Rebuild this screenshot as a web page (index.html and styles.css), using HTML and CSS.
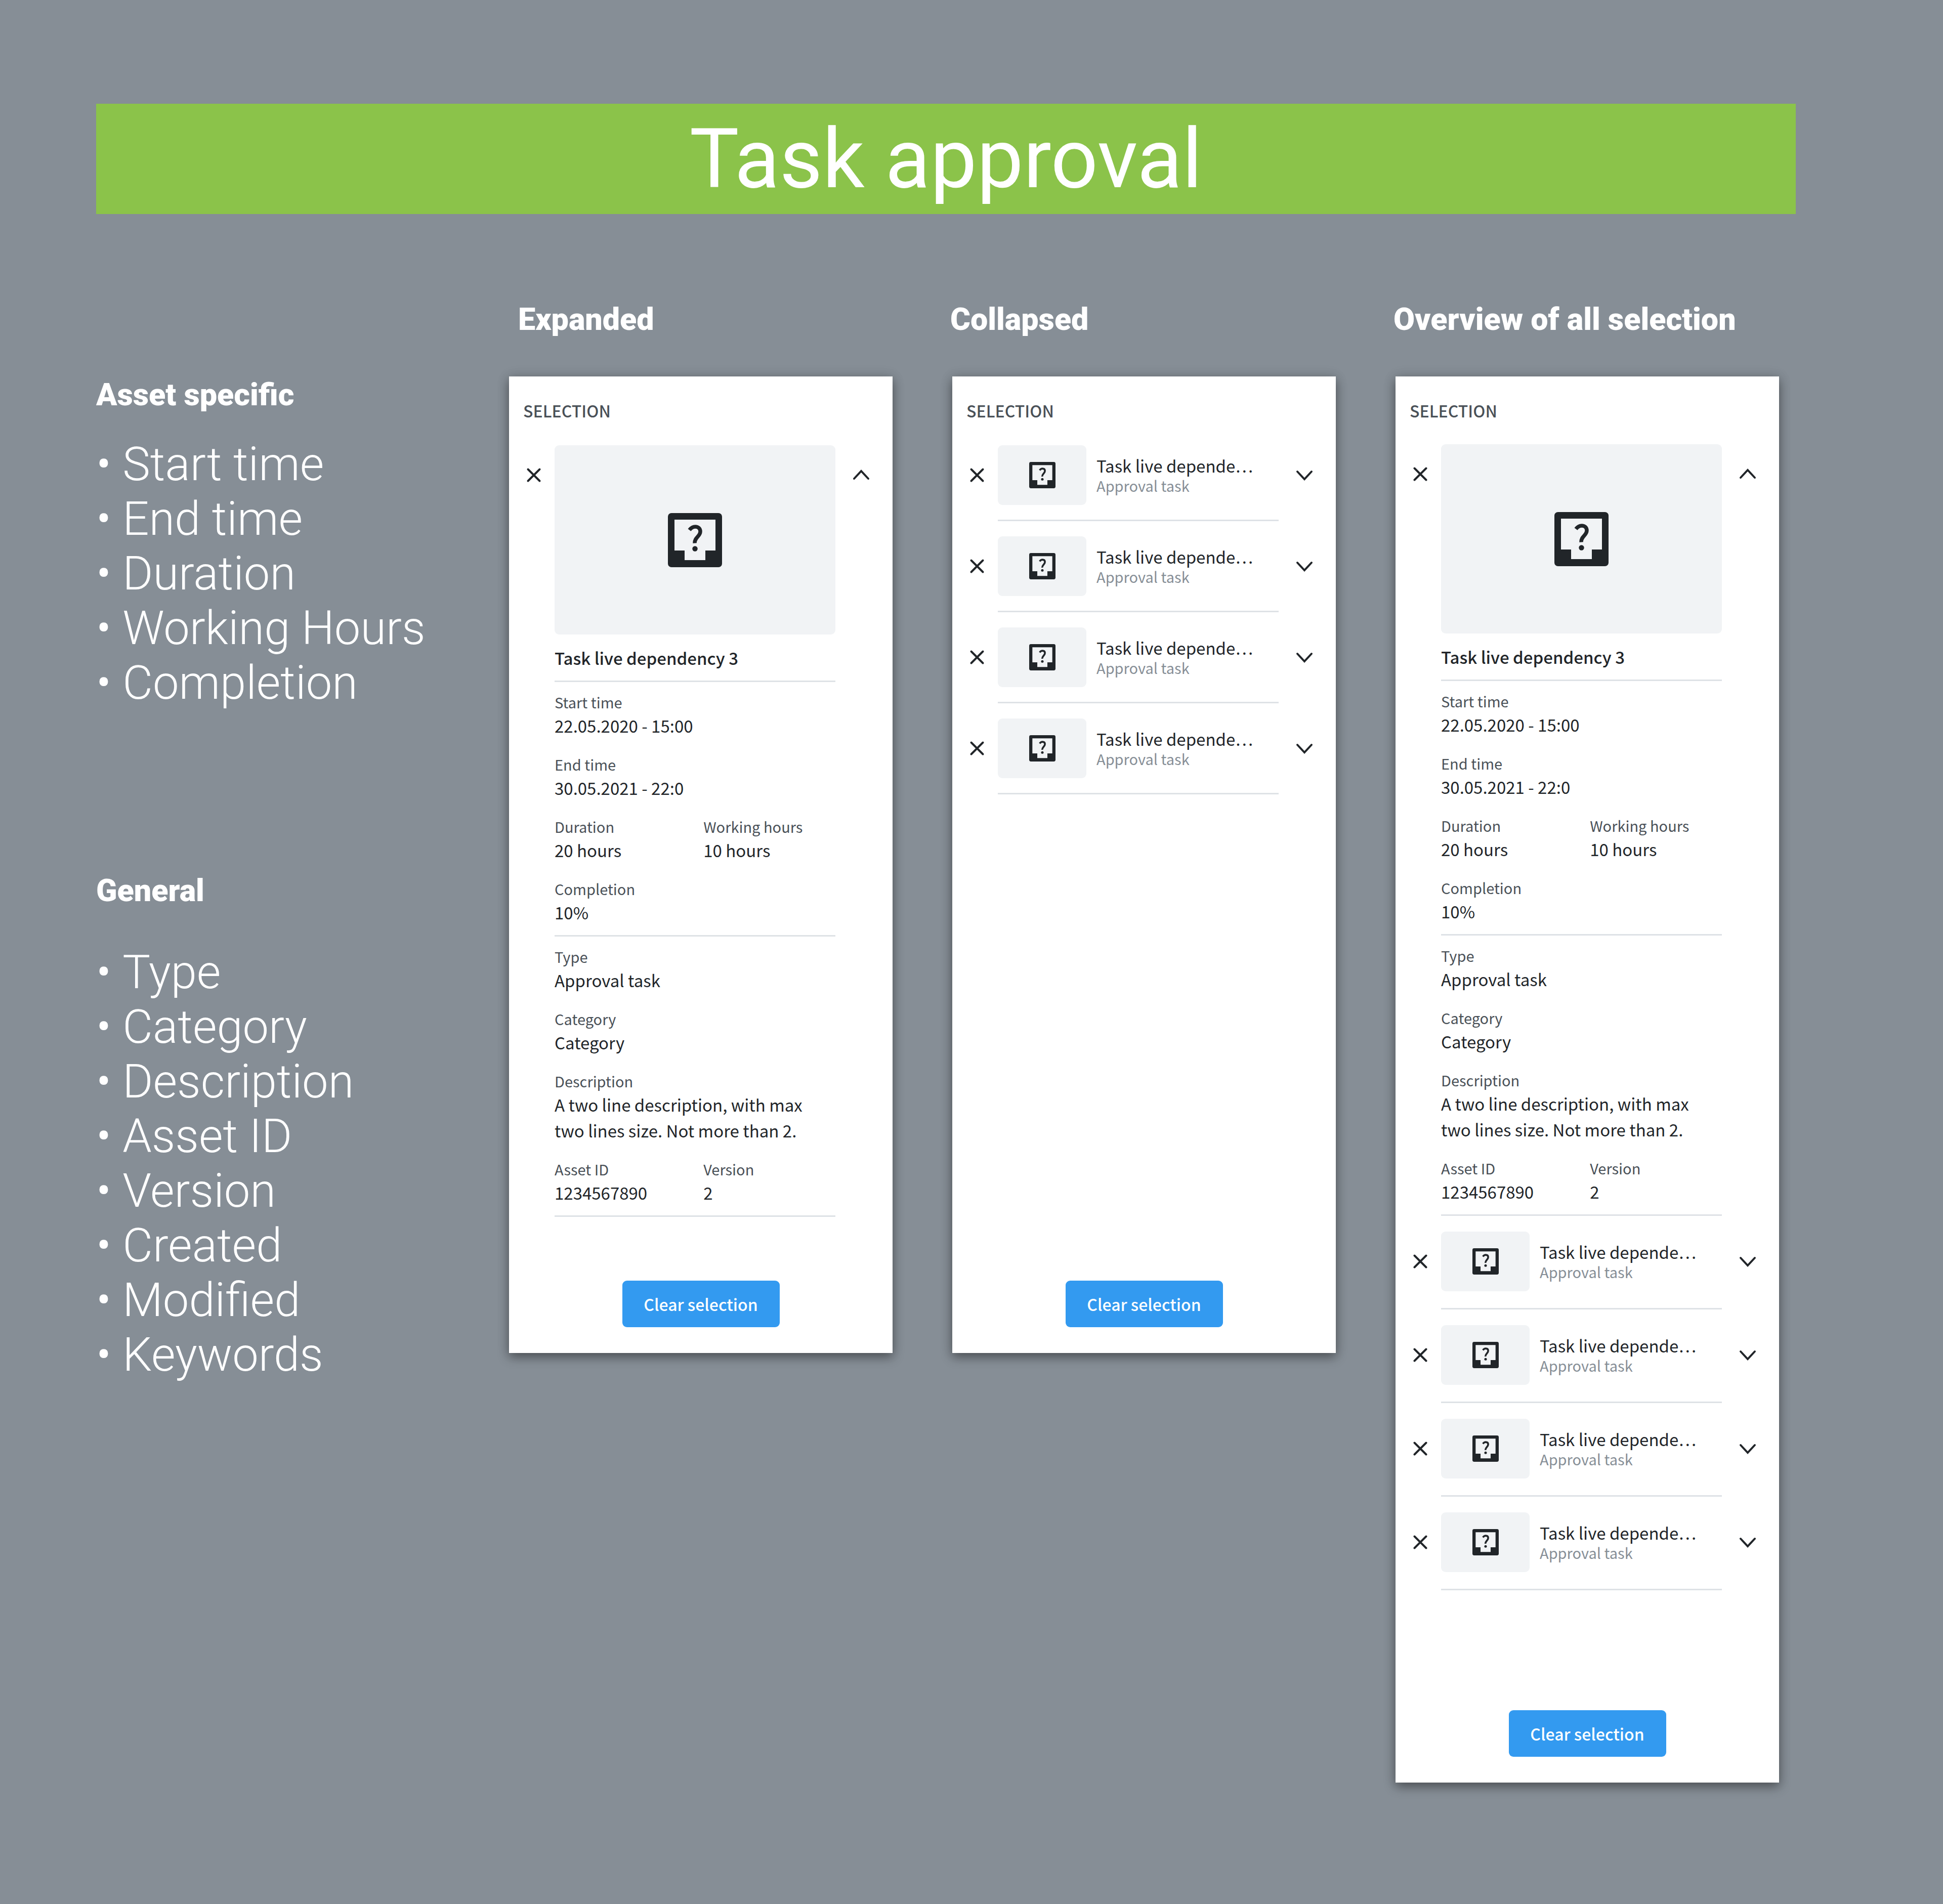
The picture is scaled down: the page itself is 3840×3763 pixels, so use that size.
FILE: index.html
```html
<!DOCTYPE html>
<html lang="en">
<head>
  <meta charset="UTF-8">
  <meta name="viewport" content="width=device-width, initial-scale=1.0">
  <title>Task approval</title>
  <link rel="stylesheet" href="styles.css">
</head>
<body>

  <!-- shared icons -->
  <svg class="sprite" aria-hidden="true">
    <symbol id="icon-close" viewBox="0 0 50 50">
      <path d="M13.500 13.500l23 23M36.500 13.500l-23 23"/>
    </symbol>
    <symbol id="icon-up" viewBox="0 0 50 50">
      <path d="M11 32l14-15 14 15"/>
    </symbol>
    <symbol id="icon-down" viewBox="0 0 50 50">
      <path d="M11 18l14 15 14-15"/>
    </symbol>
    <symbol id="icon-task" viewBox="0 0 107 107">
      <path fill="#212529" fill-rule="evenodd" d="M7 0h93a7 7 0 0 1 7 7v93a7 7 0 0 1-7 7H7a7 7 0 0 1-7-7V7a7 7 0 0 1 7-7zM13 13v61h20v19h41V74h20V13z"/>
      <path fill="none" stroke="#212529" stroke-width="7.500" d="M42.500 33.500C46 29 49.500 27 54 27c6.500 0 10 4 10 9.500C64 46 52.500 48 53 59.500"/>
      <circle cx="53.500" cy="70.500" r="5.200" fill="#212529"/>
    </symbol>
  </svg>

  <main class="page">
    <h1 class="banner">Task approval</h1>

    <div class="board">
      <div class="notes">
        <h2>Asset specific</h2>
        <ul>
          <li>Start time</li>
          <li>End time</li>
          <li>Duration</li>
          <li>Working Hours</li>
          <li>Completion</li>
        </ul>
        <h2 class="notes-general">General</h2>
        <ul>
          <li>Type</li>
          <li>Category</li>
          <li>Description</li>
          <li>Asset ID</li>
          <li>Version</li>
          <li>Created</li>
          <li>Modified</li>
          <li>Keywords</li>
        </ul>
      </div>

      <!-- Expanded -->
      <div class="column column-expanded">
        <h2>Expanded</h2>
        <section class="panel">
          <h3>SELECTION</h3>
          <article class="item">
            <button type="button" class="icon-btn" aria-label="Remove"><svg><use href="#icon-close"/></svg></button>
            <div class="details">
              <div class="preview"><svg><use href="#icon-task"/></svg></div>
              <h4>Task live dependency 3</h4>
              <dl>
                <div class="field"><dt>Start time</dt><dd>22.05.2020 - 15:00</dd></div>
                <div class="field"><dt>End time</dt><dd>30.05.2021 - 22:0</dd></div>
                <div class="field-row">
                  <div class="field"><dt>Duration</dt><dd>20 hours</dd></div>
                  <div class="field"><dt>Working hours</dt><dd>10 hours</dd></div>
                </div>
                <div class="field"><dt>Completion</dt><dd>10%</dd></div>
              </dl>
              <dl>
                <div class="field"><dt>Type</dt><dd>Approval task</dd></div>
                <div class="field"><dt>Category</dt><dd>Category</dd></div>
                <div class="field"><dt>Description</dt><dd>A two line description, with max<br>two lines size. Not more than 2.</dd></div>
                <div class="field-row">
                  <div class="field"><dt>Asset ID</dt><dd>1234567890</dd></div>
                  <div class="field"><dt>Version</dt><dd>2</dd></div>
                </div>
              </dl>
            </div>
            <button type="button" class="icon-btn toggle" aria-label="Collapse"><svg><use href="#icon-up"/></svg></button>
          </article>
          <footer><button type="button" class="clear-btn">Clear selection</button></footer>
        </section>
      </div>

      <!-- Collapsed -->
      <div class="column">
        <h2>Collapsed</h2>
        <section class="panel">
          <h3>SELECTION</h3>
          <article class="item">
            <button type="button" class="icon-btn" aria-label="Remove"><svg><use href="#icon-close"/></svg></button>
            <div class="summary">
              <div class="thumb"><svg><use href="#icon-task"/></svg></div>
              <div class="text"><p class="name">Task live depende…</p><p class="type">Approval task</p></div>
            </div>
            <button type="button" class="icon-btn toggle" aria-label="Expand"><svg><use href="#icon-down"/></svg></button>
          </article>
          <article class="item">
            <button type="button" class="icon-btn" aria-label="Remove"><svg><use href="#icon-close"/></svg></button>
            <div class="summary">
              <div class="thumb"><svg><use href="#icon-task"/></svg></div>
              <div class="text"><p class="name">Task live depende…</p><p class="type">Approval task</p></div>
            </div>
            <button type="button" class="icon-btn toggle" aria-label="Expand"><svg><use href="#icon-down"/></svg></button>
          </article>
          <article class="item">
            <button type="button" class="icon-btn" aria-label="Remove"><svg><use href="#icon-close"/></svg></button>
            <div class="summary">
              <div class="thumb"><svg><use href="#icon-task"/></svg></div>
              <div class="text"><p class="name">Task live depende…</p><p class="type">Approval task</p></div>
            </div>
            <button type="button" class="icon-btn toggle" aria-label="Expand"><svg><use href="#icon-down"/></svg></button>
          </article>
          <article class="item">
            <button type="button" class="icon-btn" aria-label="Remove"><svg><use href="#icon-close"/></svg></button>
            <div class="summary">
              <div class="thumb"><svg><use href="#icon-task"/></svg></div>
              <div class="text"><p class="name">Task live depende…</p><p class="type">Approval task</p></div>
            </div>
            <button type="button" class="icon-btn toggle" aria-label="Expand"><svg><use href="#icon-down"/></svg></button>
          </article>
          <footer><button type="button" class="clear-btn">Clear selection</button></footer>
        </section>
      </div>

      <!-- Overview -->
      <div class="column">
        <h2>Overview of all selection</h2>
        <section class="panel panel-overview">
          <h3>SELECTION</h3>
          <article class="item">
            <button type="button" class="icon-btn" aria-label="Remove"><svg><use href="#icon-close"/></svg></button>
            <div class="details">
              <div class="preview"><svg><use href="#icon-task"/></svg></div>
              <h4>Task live dependency 3</h4>
              <dl>
                <div class="field"><dt>Start time</dt><dd>22.05.2020 - 15:00</dd></div>
                <div class="field"><dt>End time</dt><dd>30.05.2021 - 22:0</dd></div>
                <div class="field-row">
                  <div class="field"><dt>Duration</dt><dd>20 hours</dd></div>
                  <div class="field"><dt>Working hours</dt><dd>10 hours</dd></div>
                </div>
                <div class="field"><dt>Completion</dt><dd>10%</dd></div>
              </dl>
              <dl>
                <div class="field"><dt>Type</dt><dd>Approval task</dd></div>
                <div class="field"><dt>Category</dt><dd>Category</dd></div>
                <div class="field"><dt>Description</dt><dd>A two line description, with max<br>two lines size. Not more than 2.</dd></div>
                <div class="field-row">
                  <div class="field"><dt>Asset ID</dt><dd>1234567890</dd></div>
                  <div class="field"><dt>Version</dt><dd>2</dd></div>
                </div>
              </dl>
            </div>
            <button type="button" class="icon-btn toggle" aria-label="Collapse"><svg><use href="#icon-up"/></svg></button>
          </article>
          <article class="item">
            <button type="button" class="icon-btn" aria-label="Remove"><svg><use href="#icon-close"/></svg></button>
            <div class="summary">
              <div class="thumb"><svg><use href="#icon-task"/></svg></div>
              <div class="text"><p class="name">Task live depende…</p><p class="type">Approval task</p></div>
            </div>
            <button type="button" class="icon-btn toggle" aria-label="Expand"><svg><use href="#icon-down"/></svg></button>
          </article>
          <article class="item">
            <button type="button" class="icon-btn" aria-label="Remove"><svg><use href="#icon-close"/></svg></button>
            <div class="summary">
              <div class="thumb"><svg><use href="#icon-task"/></svg></div>
              <div class="text"><p class="name">Task live depende…</p><p class="type">Approval task</p></div>
            </div>
            <button type="button" class="icon-btn toggle" aria-label="Expand"><svg><use href="#icon-down"/></svg></button>
          </article>
          <article class="item">
            <button type="button" class="icon-btn" aria-label="Remove"><svg><use href="#icon-close"/></svg></button>
            <div class="summary">
              <div class="thumb"><svg><use href="#icon-task"/></svg></div>
              <div class="text"><p class="name">Task live depende…</p><p class="type">Approval task</p></div>
            </div>
            <button type="button" class="icon-btn toggle" aria-label="Expand"><svg><use href="#icon-down"/></svg></button>
          </article>
          <article class="item">
            <button type="button" class="icon-btn" aria-label="Remove"><svg><use href="#icon-close"/></svg></button>
            <div class="summary">
              <div class="thumb"><svg><use href="#icon-task"/></svg></div>
              <div class="text"><p class="name">Task live depende…</p><p class="type">Approval task</p></div>
            </div>
            <button type="button" class="icon-btn toggle" aria-label="Expand"><svg><use href="#icon-down"/></svg></button>
          </article>
          <footer><button type="button" class="clear-btn">Clear selection</button></footer>
        </section>
      </div>
    </div>
  </main>

</body>
</html>
```
FILE: styles.css
```css
* {
  box-sizing: border-box;
  margin: 0;
  padding: 0;
}

body {
  font-family: Roboto, sans-serif;
  background: #868e96;
  color: #fff;
  min-height: 100vh;
}

.sprite {
  display: none;
}

.page {
  padding: 205px 291px 205px 190px;
}

.banner {
  background: #8bc34a;
  font-size: 164px;
  font-weight: 400;
  line-height: 218px;
  text-align: center;
}

.board {
  display: grid;
  grid-template-columns: 698fr 758fr 758fr 758fr;
  gap: 118px;
  align-items: start;
  margin-top: 172px;
  padding-right: 33px;
}

h2 {
  font-size: 61px;
  font-weight: 900;
  line-height: 72px;
  white-space: nowrap;
}

.notes {
  padding-top: 149px;
}

.notes ul {
  list-style: "• " inside;
  margin-top: 48px;
  font-size: 92px;
  font-weight: 300;
  line-height: 108px;
  white-space: nowrap;
}

.notes .notes-general {
  margin-top: 320px;
}

.notes .notes-general + ul {
  margin-top: 72px;
}

.column h2 {
  margin-left: -4px;
}

.column-expanded h2 {
  padding-left: 22px;
}

.panel {
  display: flex;
  flex-direction: column;
  min-height: 1930px;
  margin-top: 77px;
  padding: 47px 37px 51px 24px;
  background: #fff;
  color: #212529;
  font-family: "Noto Sans CJK SC", "Open Sans", sans-serif;
  box-shadow: 0 8px 20px rgba(0, 0, 0, 0.4), 0 0 24px rgba(0, 0, 0, 0.1);
}

.panel h3 {
  margin-bottom: 49px;
  padding-left: 4px;
  color: #495057;
  font-size: 32px;
  font-weight: 500;
  line-height: 40px;
}

.item {
  display: grid;
  grid-template-columns: 66px 1fr 76px;
  align-items: start;
  margin-bottom: 30px;
}

.icon-btn {
  width: 50px;
  height: 50px;
  margin-top: 34px;
  border: none;
  background: none;
  cursor: pointer;
}

.icon-btn svg {
  display: block;
  width: 50px;
  height: 50px;
  fill: none;
  stroke: #212529;
  stroke-width: 4;
  stroke-linecap: round;
}

.toggle {
  justify-self: end;
}

.preview,
.thumb {
  display: flex;
  align-items: center;
  justify-content: center;
  border-radius: 9px;
  background: #f1f3f5;
}

.preview {
  height: 374px;
}

.preview svg {
  width: 107px;
  height: 107px;
}

.details h4 {
  padding: 21px 0 19px;
  border-bottom: 3px solid #dee2e6;
  font-size: 33px;
  font-weight: 500;
  line-height: 51px;
}

.details dl {
  display: flex;
  flex-direction: column;
  gap: 29px;
  padding: 18px 0 19px;
  border-bottom: 3px solid #dee2e6;
}

.field-row {
  display: grid;
  grid-template-columns: 53% 1fr;
}

.field dt {
  color: #495057;
  font-size: 29px;
  line-height: 43px;
}

.field dd {
  font-size: 33px;
  line-height: 51px;
  white-space: nowrap;
}

.summary {
  display: flex;
  align-items: center;
  padding-bottom: 29px;
  border-bottom: 3px solid #dee2e6;
}

.thumb {
  width: 175px;
  height: 118px;
  margin-right: 20px;
}

.thumb svg {
  width: 52px;
  height: 52px;
}

.name {
  font-size: 33px;
  line-height: 40px;
  white-space: nowrap;
}

.type {
  color: #868e96;
  font-size: 29px;
  line-height: 38px;
}

.panel footer {
  margin-top: auto;
  padding: 96px 0 0 13px;
  text-align: center;
}

.clear-btn {
  width: 311px;
  height: 92px;
  border: none;
  border-radius: 9px;
  background: #339af0;
  color: #fff;
  font-family: inherit;
  font-size: 32px;
  font-weight: 500;
  cursor: pointer;
}

.panel-overview h3 {
  margin-bottom: 47px;
}

.panel-overview .item {
  margin-bottom: 31px;
}

.panel-overview .summary {
  padding-bottom: 33px;
}

.panel-overview footer {
  padding-top: 206px;
}

@media (max-width: 2400px) {
  .board {
    grid-template-columns: 1fr;
  }
}
```
